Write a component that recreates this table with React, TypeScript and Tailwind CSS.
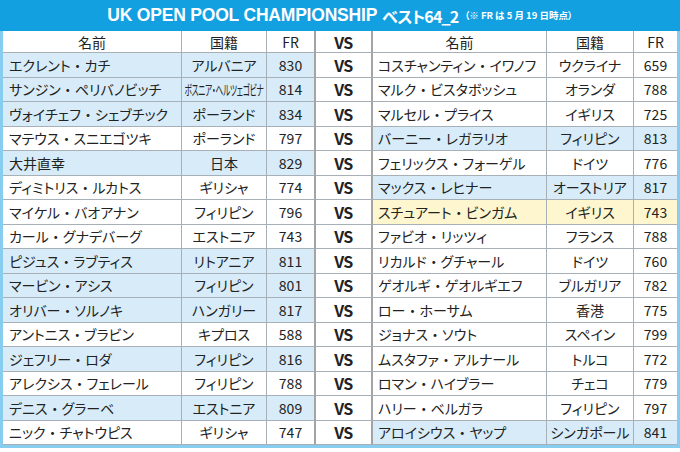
import React from "react";

type Player = { name: string; country: string; fr: number; tone?: "blue" | "yellow" };
type Match = { left: Player; right: Player };

const matches: Match[] = [
  { left: { name: "エクレント・カチ", country: "アルバニア", fr: 830, tone: "blue" }, right: { name: "コスチャンティン・イワノフ", country: "ウクライナ", fr: 659 } },
  { left: { name: "サンジン・ペリバノビッチ", country: "ボスニア・ヘルツェゴビナ", fr: 814, tone: "blue" }, right: { name: "マルク・ビスタボッシュ", country: "オランダ", fr: 788 } },
  { left: { name: "ヴォイチェフ・シェブチック", country: "ポーランド", fr: 834, tone: "blue" }, right: { name: "マルセル・プライス", country: "イギリス", fr: 725 } },
  { left: { name: "マテウス・スニエゴツキ", country: "ポーランド", fr: 797 }, right: { name: "バーニー・レガラリオ", country: "フィリピン", fr: 813, tone: "blue" } },
  { left: { name: "大井直幸", country: "日本", fr: 829, tone: "blue" }, right: { name: "フェリックス・フォーゲル", country: "ドイツ", fr: 776 } },
  { left: { name: "ディミトリス・ルカトス", country: "ギリシャ", fr: 774 }, right: { name: "マックス・レヒナー", country: "オーストリア", fr: 817, tone: "blue" } },
  { left: { name: "マイケル・バオアナン", country: "フィリピン", fr: 796 }, right: { name: "スチュアート・ビンガム", country: "イギリス", fr: 743, tone: "yellow" } },
  { left: { name: "カール・グナデバーグ", country: "エストニア", fr: 743 }, right: { name: "ファビオ・リッツィ", country: "フランス", fr: 788 } },
  { left: { name: "ピジュス・ラブティス", country: "リトアニア", fr: 811, tone: "blue" }, right: { name: "リカルド・グチャール", country: "ドイツ", fr: 760 } },
  { left: { name: "マービン・アシス", country: "フィリピン", fr: 801, tone: "blue" }, right: { name: "ゲオルギ・ゲオルギエフ", country: "ブルガリア", fr: 782 } },
  { left: { name: "オリバー・ソルノキ", country: "ハンガリー", fr: 817, tone: "blue" }, right: { name: "ロー・ホーサム", country: "香港", fr: 775 } },
  { left: { name: "アントニス・ブラビン", country: "キプロス", fr: 588 }, right: { name: "ジョナス・ソウト", country: "スペイン", fr: 799 } },
  { left: { name: "ジェフリー・ロダ", country: "フィリピン", fr: 816, tone: "blue" }, right: { name: "ムスタファ・アルナール", country: "トルコ", fr: 772 } },
  { left: { name: "アレクシス・フェレール", country: "フィリピン", fr: 788 }, right: { name: "ロマン・ハイブラー", country: "チェコ", fr: 779 } },
  { left: { name: "デニス・グラーベ", country: "エストニア", fr: 809, tone: "blue" }, right: { name: "ハリー・ベルガラ", country: "フィリピン", fr: 797 } },
  { left: { name: "ニック・チャトウピス", country: "ギリシャ", fr: 747 }, right: { name: "アロイシウス・ヤップ", country: "シンガポール", fr: 841, tone: "blue" } },
];

const toneBg = (tone?: "blue" | "yellow") =>
  tone === "blue" ? "bg-[#d7ecf8]" : tone === "yellow" ? "bg-[#fdf6cf]" : "bg-white";

// keep the middle dot full width while kana stay proportional
function Name({ text }: { text: string }) {
  const parts = text.split("・");
  return (
    <>
      {parts.map((part, i) => (
        <React.Fragment key={i}>
          {i > 0 && <span className="[font-feature-settings:normal]">・</span>}
          {part}
        </React.Fragment>
      ))}
    </>
  );
}

function PlayerCells({ p, side }: { p: Player; side: "left" | "right" }) {
  const bg = toneBg(p.tone);
  const long = p.country.length > 8;
  return (
    <>
      <div className={`${bg} flex items-center border-r border-b border-[#a7b0b6] ${side === "left" ? "pl-[6px]" : "pl-[5px]"} whitespace-nowrap overflow-hidden`}>
        <Name text={p.name} />
      </div>
      <div className={`${bg} flex items-center justify-center border-r border-b border-[#a7b0b6] whitespace-nowrap overflow-hidden`}>
        {long ? (
          <span className="inline-block scale-x-[0.55] tracking-[-0.5px] -mx-[40px]">{p.country}</span>
        ) : (
          p.country
        )}
      </div>
      <div
        className={`${bg} flex items-center justify-center border-b border-[#a7b0b6] ${
          side === "left" ? "border-r-2 border-r-[#a4a4a4]" : ""
        }`}
      >
        {p.fr}
      </div>
    </>
  );
}

export default function App() {
  return (
    <div
      className="w-[680px] h-[452px] bg-white text-[#222] overflow-hidden [font-feature-settings:'palt']"
      style={{ fontFamily: '"Noto Sans CJK JP", "Noto Sans", sans-serif' }}
    >
      {/* title */}
      <div className="h-[31px] bg-[#12a0e1] flex items-center justify-center text-white font-bold">
        <span className="text-[17.5px] tracking-[-0.2px] leading-none" style={{ fontFamily: '"Liberation Sans", "Noto Sans CJK JP", sans-serif' }}>
          UK OPEN POOL CHAMPIONSHIP
        </span>
        <span className="text-[16px] ml-[5px] leading-none tracking-[-0.8px]">ベスト64_2</span>
        <span className="text-[9.5px] ml-[6px] leading-none">（※ FR は 5 月 19 日時点）</span>
      </div>

      {/* table */}
      <div className="border-x-[3px] border-b-[3px] border-[#86cdef]">
        <div className="grid grid-cols-[179px_85px_49px_57px_174px_87px_43px] grid-rows-[22px_repeat(16,24.5px)] text-[14px] leading-none">
          <div className="flex items-center justify-center border-r border-b border-[#a7b0b6]">名前</div>
          <div className="flex items-center justify-center border-r border-b border-[#a7b0b6]">国籍</div>
          <div className="flex items-center justify-center border-b border-[#a7b0b6] border-r-2 border-r-[#a4a4a4]">FR</div>
          <div className="flex items-center justify-center border-b border-[#a7b0b6] border-r-2 border-r-[#a4a4a4] font-bold text-[16px] tracking-[-0.5px]">VS</div>
          <div className="flex items-center justify-center border-r border-b border-[#a7b0b6]">名前</div>
          <div className="flex items-center justify-center border-r border-b border-[#a7b0b6]">国籍</div>
          <div className="flex items-center justify-center border-b border-[#a7b0b6]">FR</div>

          {matches.map((m, i) => (
            <React.Fragment key={i}>
              <PlayerCells p={m.left} side="left" />
              <div className="bg-white flex items-center justify-center border-b border-[#a7b0b6] border-r-2 border-r-[#a4a4a4] font-bold text-[16px] tracking-[-0.5px]">
                VS
              </div>
              <PlayerCells p={m.right} side="right" />
            </React.Fragment>
          ))}
        </div>
      </div>
    </div>
  );
}
